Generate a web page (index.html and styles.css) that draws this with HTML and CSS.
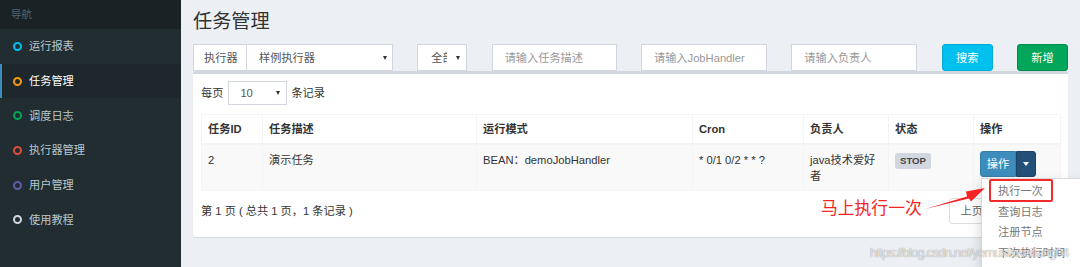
FILE: index.html
```html
<!DOCTYPE html>
<html lang="zh-CN">
<head>
<meta charset="utf-8">
<title>任务管理</title>
<link rel="stylesheet" href="styles.css">
</head>
<body>
<div class="wrapper">
  <aside class="sidebar">
    <div class="sb-header">导航</div>
    <ul class="menu">
      <li><span class="ring ring-aqua"></span><span>运行报表</span></li>
      <li class="active"><span class="ring ring-orange"></span><span>任务管理</span></li>
      <li><span class="ring ring-green"></span><span>调度日志</span></li>
      <li><span class="ring ring-red"></span><span>执行器管理</span></li>
      <li><span class="ring ring-purple"></span><span>用户管理</span></li>
      <li><span class="ring ring-gray"></span><span>使用教程</span></li>
    </ul>
  </aside>

  <main class="content">
    <h1 class="title">任务管理</h1>

    <div class="filters">
      <div class="input-group">
        <span class="addon">执行器</span>
        <span class="ctl ctl-select">样例执行器<i class="arrow"></i></span>
      </div>
      <span class="ctl ctl-select ctl-status"><span class="clip">全部</span><i class="arrow"></i></span>
      <span class="ctl placeholder">请输入任务描述</span>
      <span class="ctl placeholder">请输入JobHandler</span>
      <span class="ctl placeholder">请输入负责人</span>
      <span class="btn btn-info">搜索</span>
      <span class="btn btn-success">新增</span>
    </div>

    <section class="box">
      <div class="length">
        <span>每页</span>
        <span class="ctl ctl-select ctl-len">10<i class="arrow"></i></span>
        <span>条记录</span>
      </div>

      <table class="grid">
        <colgroup>
          <col class="c-id"><col class="c-desc"><col class="c-mode"><col class="c-cron">
          <col class="c-owner"><col class="c-status"><col class="c-op">
        </colgroup>
        <thead>
          <tr><th>任务ID</th><th>任务描述</th><th>运行模式</th><th>Cron</th><th>负责人</th><th>状态</th><th>操作</th></tr>
        </thead>
        <tbody>
          <tr>
            <td>2</td>
            <td>演示任务</td>
            <td>BEAN：demoJobHandler</td>
            <td>* 0/1 0/2 * * ?</td>
            <td>java技术爱好者</td>
            <td><span class="label">STOP</span></td>
            <td>
              <div class="btn-group">
                <span class="bg-main">操作</span><span class="bg-caret"><i class="caret"></i></span>
                <ul class="dropdown">
                  <li>执行一次</li>
                  <li>查询日志</li>
                  <li>注册节点</li>
                  <li>下次执行时间</li>
                  <span class="mark"></span>
                </ul>
              </div>
            </td>
          </tr>
        </tbody>
      </table>

      <div class="pager-row">
        <span>第 1 页 ( 总共 1 页，1 条记录 )</span>
        <div class="pager"><span class="pg">上页</span></div>
      </div>
    </section>
  </main>
</div>

<div class="annot">马上执行一次</div>
<svg class="annot-arrow" width="70" height="30" viewBox="0 0 70 30" aria-hidden="true">
  <polygon points="4,26 46,13.5 45,8.5 64,5 50,18.5 48,15.5" fill="#f42424"/>
</svg>
<div class="watermark">https://blog.csdn.net/yemuxiaweiliang04</div>
</body>
</html>
```

FILE: styles.css
```css
* { box-sizing: border-box; }

html, body {
  margin: 0;
  height: 267px;
  overflow: hidden;
}

body {
  position: relative;
  font-family: "Liberation Sans", "Noto Sans CJK SC", sans-serif;
  font-size: 11.2px;
  line-height: 16px;
  color: #333;
  background: #ecf0f5;
}

.wrapper {
  display: flex;
  height: 267px;
}

/* ---------- sidebar ---------- */
.sidebar {
  width: 181px;
  flex: none;
  background: #222d32;
}

.sb-header {
  height: 29px;
  line-height: 29px;
  padding-left: 11px;
  background: #1a2226;
  color: #4b646f;
  font-size: 10.5px;
}

.menu {
  list-style: none;
  margin: 0;
  padding: 0;
}

.menu li {
  height: 34.7px;
  display: flex;
  align-items: center;
  padding-left: 11px;
  border-left: 2px solid transparent;
  color: #b8c7ce;
}

.menu li.active {
  background: #1e282c;
  border-left-color: #3c8dbc;
  color: #fff;
}

.ring {
  width: 9px;
  height: 9px;
  border: 2px solid;
  border-radius: 50%;
  margin-right: 7px;
  flex: none;
}
.ring-aqua { border-color: #00c0ef; }
.ring-orange { border-color: #f39c12; }
.ring-green { border-color: #00a65a; }
.ring-red { border-color: #dd4b39; }
.ring-purple { border-color: #605ca8; }
.ring-gray { border-color: #d2d6de; }

/* ---------- content ---------- */
.content {
  flex: 1;
  min-width: 0;
  padding: 10px 12px 0 12px;
}

.title {
  margin: 0 0 10px;
  font-size: 19.2px;
  line-height: 24px;
  font-weight: normal;
  color: #333;
}

.filters {
  display: grid;
  grid-template-columns: 200px 50px 125px 126px 126px 51px 51px;
  column-gap: 24.33px;
  height: 27px;
}

.input-group {
  display: flex;
}

.addon {
  width: 54px;
  flex: none;
  background: #fff;
  border: 1px solid #d2d6de;
  display: flex;
  align-items: center;
  padding-left: 10px;
  color: #555;
}

.ctl {
  position: relative;
  height: 27px;
  display: flex;
  align-items: center;
  padding: 0 12px;
  background: #fff;
  border: 1px solid #d2d6de;
  color: #555;
}

.input-group .ctl {
  flex: 1;
  border-left: none;
}

.placeholder { color: #999; }

.arrow {
  position: absolute;
  right: 4px;
  top: 50%;
  margin-top: -2px;
  width: 0;
  height: 0;
  border-left: 2.5px solid transparent;
  border-right: 2.5px solid transparent;
  border-top: 4px solid #333;
}
.input-group .arrow { right: 5px; }

.ctl-status { padding-left: 13px; }
.clip {
  display: inline-block;
  width: 16px;
  overflow: hidden;
  white-space: nowrap;
}
.ctl-status .arrow { right: 6px; }

.btn {
  display: flex;
  align-items: center;
  justify-content: center;
  height: 27px;
  border-radius: 3px;
  border: 1px solid;
  color: #fff;
}
.btn-info { background: #00c0ef; border-color: #00acd6; }
.btn-success { background: #00a65a; border-color: #008d4c; }

/* ---------- box ---------- */
.box {
  background: #fff;
  border-top: 3px solid #d2d6de;
  border-radius: 3px;
  box-shadow: 0 1px 1px rgba(0, 0, 0, 0.1);
  padding: 7px 8px 13px;
}

.length {
  display: flex;
  align-items: center;
  height: 24px;
}

.ctl-len {
  width: 59px;
  height: 24px;
  margin: 0 4px 0 5px;
  padding-left: 11px;
}
.ctl-len .arrow { right: 6px; }

.grid {
  margin-top: 9px;
  width: 859px;
  table-layout: fixed;
  border-collapse: collapse;
  border: 1px solid #f4f4f4;
}

.c-id { width: 61px; }
.c-desc { width: 214px; }
.c-mode { width: 216px; }
.c-cron { width: 111px; }
.c-owner { width: 85px; }
.c-status { width: 85px; }
.c-op { width: 87px; }

.grid th,
.grid td {
  border: 1px solid #f4f4f4;
  text-align: left;
  vertical-align: top;
}

.grid th {
  padding: 6px 6px;
  font-weight: bold;
  background: #fff;
  border-bottom-width: 2px;
}

.grid td {
  padding: 6.5px 6px;
  background: #f9f9f9;
}

.label {
  display: inline-block;
  margin-top: 1px;
  background: #d2d6de;
  color: #444;
  font-weight: bold;
  font-size: 9.6px;
  line-height: 16px;
  padding: 0 5px;
  border-radius: 3px;
}

.btn-group {
  position: relative;
  display: inline-flex;
  margin-top: -1px;
  height: 26px;
  z-index: 5;
}

.bg-main {
  width: 36px;
  display: flex;
  align-items: center;
  justify-content: center;
  background: #3c8dbc;
  border: 1px solid #367fa9;
  border-radius: 3px 0 0 3px;
  color: #fff;
}

.bg-caret {
  width: 20px;
  display: flex;
  align-items: center;
  justify-content: center;
  background: #234f79;
  border: 1px solid #1d4266;
  border-radius: 0 3px 3px 0;
}

.caret {
  width: 0;
  height: 0;
  border-left: 3px solid transparent;
  border-right: 3px solid transparent;
  border-top: 4px solid #fff;
}

.dropdown {
  position: absolute;
  top: 27px;
  left: 1px;
  width: 128px;
  margin: 0;
  padding: 2px 0 4px;
  list-style: none;
  background: #fff;
  border: 1px solid rgba(0, 0, 0, 0.15);
  box-shadow: 0 6px 12px rgba(0, 0, 0, 0.175);
}

.dropdown li {
  padding: 2.4px 16px;
  line-height: 16px;
  color: #777;
  white-space: nowrap;
}

.mark {
  position: absolute;
  left: 7px;
  top: 0px;
  width: 64px;
  height: 23px;
  border: 2px solid #f32a2a;
  border-radius: 2px;
}

.pager-row {
  display: flex;
  justify-content: space-between;
  align-items: center;
  height: 26px;
  margin-top: 7px;
}

.pager {
  display: flex;
  margin-right: 56px;
}

.pg {
  height: 26px;
  line-height: 24px;
  padding: 0 20px 0 11px;
  border: 1px solid #ddd;
  border-radius: 3px 0 0 3px;
  color: #666;
  background: #fff;
}

/* ---------- overlays ---------- */
.annot {
  position: absolute;
  left: 821px;
  top: 197px;
  font-family: "Noto Sans CJK SC", sans-serif;
  font-size: 16.8px;
  line-height: 21px;
  color: #f42424;
  z-index: 6;
}

.annot-arrow {
  position: absolute;
  left: 921px;
  top: 183px;
  z-index: 6;
}

.watermark {
  position: absolute;
  left: 870px;
  top: 245px;
  font-size: 13px;
  line-height: 16px;
  letter-spacing: -0.8px;
  white-space: nowrap;
  color: rgba(255, 255, 255, 0.75);
  text-shadow: 0 0 1px rgba(0, 0, 0, 0.5);
  z-index: 10;
}
```
